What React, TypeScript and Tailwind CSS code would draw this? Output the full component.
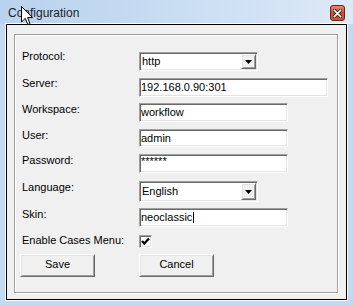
import React from 'react'

const sunken =
  'border border-t-[#a0a0a0] border-l-[#a0a0a0] border-b-white border-r-white shadow-[inset_1px_1px_0_#696969,inset_-1px_-1px_0_#e3e3e3] bg-white'
const raised =
  'border border-t-white border-l-white border-b-[#696969] border-r-[#696969] shadow-[inset_1px_1px_0_#e3e3e3,inset_-1px_-1px_0_#a0a0a0] bg-[#f0f0f0]'

const TextBox: React.FC<{ value: string; width: string; height?: string; caret?: boolean }> = ({ value, width, height = 'h-[19px]', caret }) => (
  <div className={`${sunken} ${width} ${height} flex items-center pl-[1px] leading-[13px] overflow-hidden`}>
    <span>{value}</span>
    {caret && <span className="w-[1px] h-[11px] bg-black ml-[1px]" />}
  </div>
)

const Select: React.FC<{ value: string; height: string }> = ({ value, height }) => (
  <div className={`${sunken} w-[119px] ${height} flex p-[1px]`}>
    <div className="flex-1 flex items-center pl-[1px] leading-[13px]">{value}</div>
    <div className={`${raised} w-[15px] h-full flex items-center justify-center`}>
      <svg width="7" height="4" viewBox="0 0 7 4">
        <path d="M0 0 H7 L3.5 4 Z" fill="#000" />
      </svg>
    </div>
  </div>
)

const Row: React.FC<{ label: string; mt: string; cmt?: string; children: React.ReactNode }> = ({ label, mt, cmt = '', children }) => (
  <div className={`flex items-start ${mt}`}>
    <div className="w-[117px] leading-[13px]">{label}</div>
    <div className={cmt}>{children}</div>
  </div>
)

const Button: React.FC<{ label: string }> = ({ label }) => (
  <div className={`${raised} w-[75px] h-[23px] flex items-center justify-center pb-[2px] leading-[13px]`}>{label}</div>
)

export default function App() {
  return (
    <div className="relative w-[353px] h-[305px] overflow-hidden flex flex-col bg-[#c3d9f1] text-black text-[11px] font-['Liberation_Sans',Arial,sans-serif]">
      {/* title bar */}
      <div className="h-[24px] flex items-start pl-[8px] pr-[8px] bg-gradient-to-r from-[#b9d2ee] via-[#c9ddf3] to-[#dde9f7]">
        <span className="mt-[6px] text-[12px] leading-[15px] text-[#1e1e1e]">Configuration</span>
        <div className="ml-auto mt-[5px] w-[15px] h-[16px] rounded-[3px] border border-[#6e2418] bg-[#c9553a] bg-linear-to-b from-[#e48a6e] via-[#c94b30] to-[#c7563c] flex items-center justify-center">
          <svg width="9" height="9" viewBox="0 0 9 9">
            <path d="M1.5 1.5 L7.5 7.5 M7.5 1.5 L1.5 7.5" stroke="#4a1c14" strokeWidth="3.4" strokeLinecap="square" />
            <path d="M1.5 1.5 L7.5 7.5 M7.5 1.5 L1.5 7.5" stroke="#fff" strokeWidth="1.7" strokeLinecap="square" />
          </svg>
        </div>
      </div>

      {/* client area */}
      <div className="flex-1 mx-[6px] mb-[5px] flex border border-black bg-[#f0f0f0] shadow-[0_0_0_1px_#fff] pt-[9px] pl-[7px] pr-[8px] pb-[6px]">
        <div className="flex-1 flex flex-col border border-[#a0a0a0] shadow-[inset_1px_1px_0_#fff,1px_1px_0_#fff] pt-[15px] pl-[7px]">
          <Row label="Protocol:" mt="mt-0" cmt="mt-[2px]">
            <Select value="http" height="h-[19px]" />
          </Row>
          <Row label="Server:" mt="mt-[6px]" cmt="mt-[1px]">
            <TextBox value="192.168.0.90:301" width="w-[189px]" />
          </Row>
          <Row label="Workspace:" mt="mt-[6px]">
            <TextBox value="workflow" width="w-[149px]" />
          </Row>
          <Row label="User:" mt="mt-[7px]">
            <TextBox value="admin" width="w-[149px]" height="h-[18px]" />
          </Row>
          <Row label="Password:" mt="mt-[7px]">
            <div className={`${sunken} w-[149px] h-[19px] flex items-start pl-[1px] pt-[1px] leading-[11px] text-[11px]`}>******</div>
          </Row>
          <Row label="Language:" mt="mt-[8px]">
            <Select value="English" height="h-[21px]" />
          </Row>
          <Row label="Skin:" mt="mt-[6px]">
            <TextBox value="neoclassic" width="w-[149px]" caret />
          </Row>
          <Row label="Enable Cases Menu:" mt="mt-[7px]" cmt="mt-[1px]">
            <div className={`${sunken} w-[13px] h-[13px] flex items-center justify-center`}>
              <svg width="9" height="9" viewBox="0 0 9 9">
                <path d="M1 4 L3.3 6.6 L8 1.6" stroke="#000" strokeWidth="2.2" fill="none" />
              </svg>
            </div>
          </Row>
          <div className="flex mt-[6px] ml-[-2px]">
            <div className="w-[119px]">
              <Button label="Save" />
            </div>
            <Button label="Cancel" />
          </div>
        </div>
      </div>

      {/* mouse pointer over title */}
      <svg className="absolute left-[21px] top-[6px]" width="12" height="20" viewBox="0 0 12 20">
        <path d="M0.5 0.5 L0.5 16 L4.3 12.4 L6.8 18.5 L9 17.6 L6.6 11.6 L11.5 11.6 Z" fill="#fff" stroke="#000" strokeWidth="1" strokeLinejoin="miter" />
      </svg>
    </div>
  )
}
